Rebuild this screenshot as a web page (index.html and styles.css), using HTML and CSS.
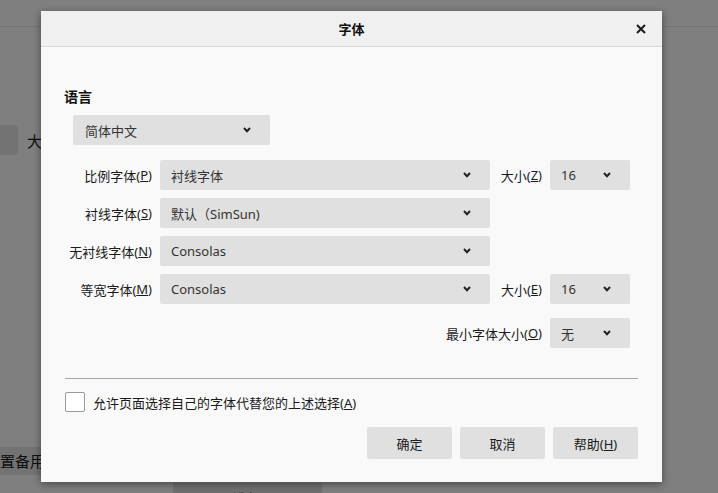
FILE: index.html
```html
<!DOCTYPE html>
<html lang="zh-CN">
<head>
	<meta charset="UTF-8">
	<title>字体</title>
	<link rel="stylesheet" href="styles.css">
</head>
<body>
	<!-- pagina de fondo (atenuada) -->
	<main class="page">
		<header class="page-top"></header>
		<div class="page-row">
			<span class="page-box"></span>
			<span class="page-text">大小</span>
		</div>
		<div class="page-row2">
			<span class="page-btn">重置备用</span>
		</div>
		<div class="page-row3">
			<span class="page-btn2">选择</span>
		</div>
	</main>

	<!-- dialogo -->
	<section class="dialog">
		<header class="dlg-head">
			<span class="dlg-title">字体</span>
			<button class="dlg-close">
				<svg width="10" height="10" viewBox="0 0 10 10"><path d="M1 1L9 9M9 1L1 9" stroke="#1a1a1a" stroke-width="2"/></svg>
			</button>
		</header>
		<div class="dlg-body">
			<h3 class="lang-title">语言</h3>
			<div class="select lang">简体中文<i class="chev"></i></div>

			<div class="fonts">
				<label class="lbl">比例字体(<u>P</u>)</label>
				<div class="select">衬线字体<i class="chev"></i></div>
				<label class="lbl">大小(<u>Z</u>)</label>
				<div class="select">16<i class="chev"></i></div>

				<label class="lbl">衬线字体(<u>S</u>)</label>
				<div class="select">默认（SimSun)<i class="chev"></i></div>
				<span></span><span></span>

				<label class="lbl">无衬线字体(<u>N</u>)</label>
				<div class="select">Consolas<i class="chev"></i></div>
				<span></span><span></span>

				<label class="lbl">等宽字体(<u>M</u>)</label>
				<div class="select">Consolas<i class="chev"></i></div>
				<label class="lbl">大小(<u>E</u>)</label>
				<div class="select">16<i class="chev"></i></div>

				<label class="lbl min">最小字体大小(<u>O</u>)</label>
				<div class="select minsel">无<i class="chev"></i></div>
			</div>

			<hr class="sep">

			<div class="check-row">
				<span class="checkbox"></span>
				<span>允许页面选择自己的字体代替您的上述选择(<u>A</u>)</span>
			</div>

			<div class="buttons">
				<button class="btn">确定</button>
				<button class="btn">取消</button>
				<button class="btn">帮助(<u>H</u>)</button>
			</div>
		</div>
	</section>
</body>
</html>
```

FILE: styles.css
```css
/* base */
html, body {
	margin: 0;
	height: 493px;
	overflow: hidden;
}
body {
	background-color: #7f7f7f;
	font-family: "Noto Sans", "Noto Sans CJK SC", sans-serif;
	font-size: 13px;
	color: #1a1a1a;
	position: relative;
}

/* page (fondo) */
.page-top {
	height: 26px;
	border-bottom: 1px solid #747474;
}
.page-row {
	display: flex;
	align-items: center;
	gap: 9px;
	margin-top: 98px;
}
.page-box {
	width: 18px;
	height: 30px;
	background-color: #737373;
	border-radius: 0 3px 3px 0;
}
.page-text {
	font-size: 15px;
	color: #0d0d0d;
}
.page-row2 {
	margin-top: 292px;
}
.page-btn {
	display: inline-block;
	margin-left: -15px;
	padding: 0 2px 0 0;
	height: 28px;
	line-height: 28px;
	background-color: #737373;
	color: #0d0d0d;
	font-size: 15px;
}
.page-row3 {
	margin-top: 8px;
	margin-left: 173px;
}
.page-btn2 {
	display: inline-block;
	width: 149px;
	height: 32px;
	line-height: 32px;
	text-align: center;
	background-color: #707070;
	color: #0d0d0d;
	font-size: 15px;
}

/* dialog */
.dialog {
	position: absolute;
	top: 11px; left: 41px;
	width: 621px;
	height: 471px;
	background-color: #f9f9f9;
	box-shadow: 0 2px 8px rgba(0,0,0,.45);
}
.dlg-head {
	height: 35px;
	background-color: #f0f0f0;
	border-bottom: 1px solid #d7d7d7;
	display: flex;
	align-items: center;
	justify-content: center;
	position: relative;
}
.dlg-title {
	font-weight: bold;
	font-size: 13px;
	color: #111;
}
.dlg-close {
	position: absolute;
	right: 12px; top: 8px;
	width: 18px;
	height: 20px;
	border: none;
	background: transparent;
	padding: 0;
	display: flex;
	align-items: center;
	justify-content: center;
}
.dlg-body {
	padding: 40px 24px 0 24px;
}
.lang-title {
	margin: 0 0 8px -1px;
	font-size: 14px;
	line-height: 20px;
	font-weight: bold;
	color: #111;
}

/* selects */
.select {
	height: 30px;
	background-color: #e0e0e0;
	border-radius: 2px;
	display: flex;
	align-items: center;
	justify-content: space-between;
	padding: 0 19px 0 11px;
	color: #333;
	box-sizing: border-box;
}
.select.lang {
	width: 197px;
	margin-left: 8px;
	padding-left: 12px;
}
.chev {
	width: 8px;
	height: 6px;
	background: url("data:image/svg+xml;utf8,<svg xmlns='http://www.w3.org/2000/svg' width='8' height='6' viewBox='0 0 8 6'><path d='M1 1L4 4.2L7 1' fill='none' stroke='%23222' stroke-width='2'/></svg>") no-repeat center;
}

/* grid of fonts */
.fonts {
	display: grid;
	grid-template-columns: 87px 330px 44px 80px;
	grid-template-rows: 30px 30px 30px 30px 36px;
	column-gap: 8px;
	row-gap: 8px;
	margin-top: 15px;
}
.lbl {
	display: flex;
	align-items: center;
	justify-content: flex-end;
	white-space: nowrap;
	color: #1a1a1a;
}
.lbl.min {
	grid-column: 1 / 4;
	margin-top: 6px;
}
.select.minsel {
	margin-top: 6px;
}

.sep {
	border: none;
	border-top: 1px solid #a6a6a6;
	margin: 30px 0 0 0;
	height: 0;
}

.check-row {
	display: flex;
	align-items: center;
	gap: 8px;
	margin-top: 13px;
}
.checkbox {
	width: 18px;
	height: 18px;
	border: 1px solid #9a9a9a;
	border-radius: 2px;
	background-color: #fff;
}

.buttons {
	display: flex;
	justify-content: flex-end;
	gap: 8px;
	margin-top: 15px;
}
.btn {
	width: 85px;
	height: 32px;
	border: none;
	border-radius: 2px;
	background-color: #e0e0e0;
	font-family: inherit;
	font-size: 13px;
	color: #1a1a1a;
	padding: 0;
}
```
